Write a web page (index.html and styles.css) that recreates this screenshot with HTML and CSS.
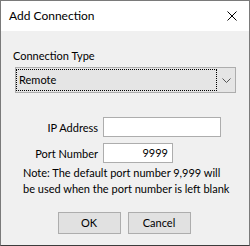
FILE: index.html
```html
<!DOCTYPE html>
<html>
<head>
<meta charset="utf-8">
<link rel="stylesheet" href="styles.css">
</head>
<body>
<div class="window">
  <div class="titlebar">
    <span class="title">Add Connection</span>
    <svg class="close" width="10" height="10" viewBox="0 0 10 10"><path d="M0.5 0.5 L9.5 9.5 M9.5 0.5 L0.5 9.5" stroke="#000" stroke-width="1" fill="none"/></svg>
  </div>
  <div class="body">
    <div class="section-label">Connection Type</div>
    <div class="combo">
      <div class="combo-value">Remote</div>
      <div class="combo-arrow">
        <svg width="9" height="5" viewBox="0 0 9 5"><path d="M0.5 0.5 L4.5 4.5 L8.5 0.5" stroke="#555" stroke-width="1" fill="none"/></svg>
      </div>
    </div>
    <div class="form">
      <div class="row">
        <label class="row-label">IP Address</label>
        <div class="input input-ip"></div>
      </div>
      <div class="row">
        <label class="row-label">Port Number</label>
        <div class="input input-port">9999</div>
      </div>
    </div>
    <div class="note">Note: The default port number 9,999 will<br>be used when the port number is left blank</div>
    <div class="buttons">
      <div class="btn">OK</div>
      <div class="btn">Cancel</div>
    </div>
  </div>
</div>
</body>
</html>
```
FILE: styles.css
```css
* { box-sizing: border-box; }
html, body { margin: 0; padding: 0; }
body {
  width: 250px;
  height: 246px;
  font-family: "Lato", "Noto Sans", sans-serif;
  font-size: 11px;
  color: #000;
  background: #fff;
}
.window {
  width: 250px;
  height: 246px;
  border: 1px solid #7a7a7a;
  border-bottom-color: #3c3c3c;
  display: flex;
  flex-direction: column;
}
.titlebar {
  height: 30px;
  background: #fff;
  display: flex;
  align-items: center;
  justify-content: space-between;
  padding: 0 12px 0 8px;
  flex: none;
}
.title {
  font-size: 12px;
  line-height: 16px;
}
.close { display: block; }
.body {
  flex: 1;
  background: #f0f0f0;
  padding: 17px 13px 0 12px;
  display: flex;
  flex-direction: column;
}
.section-label {
  line-height: 16px;
  height: 16px;
}
.combo {
  margin-top: 3px;
  margin-left: 2px;
  width: 221px;
  height: 26px;
  border: 1px solid #adadad;
  background: #e5e5e5;
  display: flex;
  padding: 1px 0 1px 0;
}
.combo-value {
  width: 201px;
  border: 1px dotted #000;
  padding-left: 2px;
  line-height: 20px;
}
.combo-arrow {
  flex: 1;
  display: flex;
  align-items: center;
  justify-content: center;
  padding-top: 1px;
}
.combo-arrow svg { display: block; }
.form {
  margin-top: 24px;
  display: flex;
  flex-direction: column;
  gap: 6px;
}
.row {
  display: flex;
  align-items: center;
  height: 20px;
}
.row-label {
  width: 85px;
  text-align: right;
}
.input {
  margin-left: 5px;
  height: 20px;
  border: 1px solid #adadad;
  background: #fff;
  line-height: 18px;
  text-align: right;
  padding-right: 4px;
}
.input-ip { width: 118px; }
.input-port { width: 70px; }
.note {
  margin-top: 2px;
  padding-left: 10px;
  line-height: 16px;
  white-space: nowrap;
}
.buttons {
  margin-top: 15px;
  display: flex;
  justify-content: center;
  gap: 7px;
  padding-right: 1px;
}
.btn {
  width: 63px;
  height: 22px;
  border: 1px solid #adadad;
  background: #e1e1e1;
  text-align: center;
  line-height: 20px;
}
```
